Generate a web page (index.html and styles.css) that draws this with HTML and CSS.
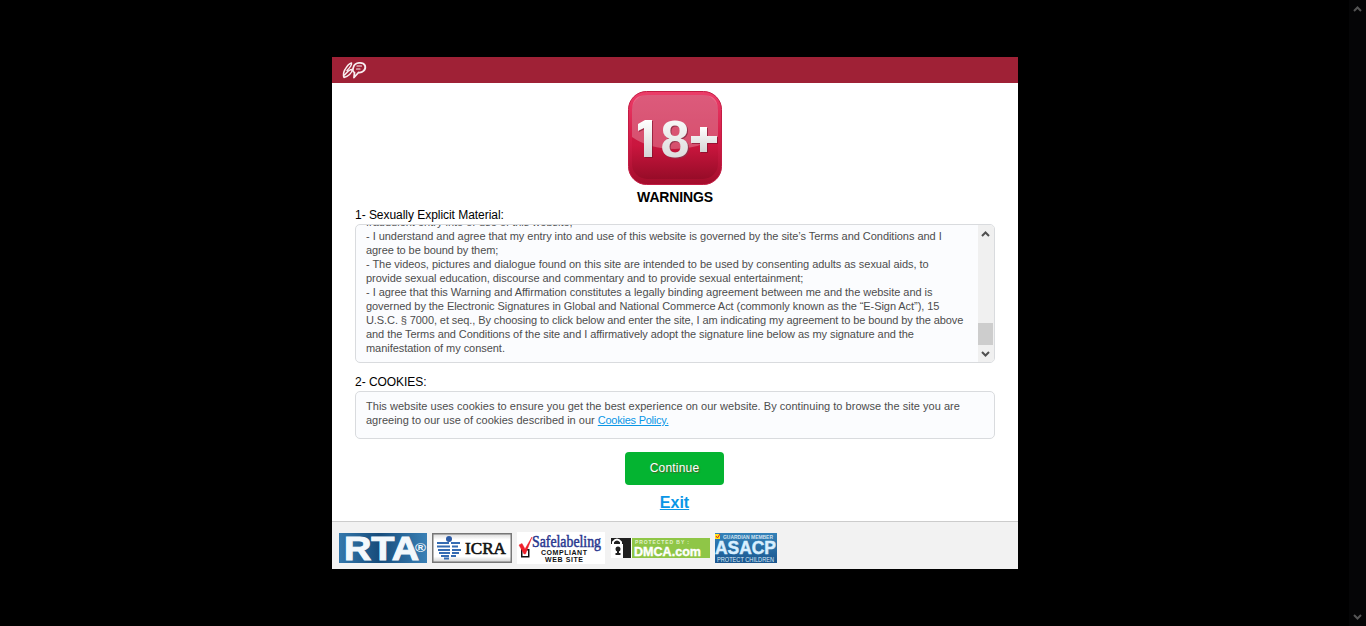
FILE: index.html
```html
<!DOCTYPE html>
<html lang="en">
<head>
<meta charset="utf-8">
<title>Warnings</title>
<link rel="stylesheet" href="styles.css">
</head>
<body>
<main class="page">
  <section class="modal">
    <header class="modal-header">
      <svg class="logo" width="28" height="20" viewBox="0 0 28 20" fill="none" stroke="#f8eef0" stroke-linecap="round" stroke-linejoin="round">
        <path stroke-width="1.500" d="M4 9.500C6 6 8 3.500 10.500 3C11 5.500 8 8.500 6 10.500M4 9.500C2.500 12 2 15 3 17.500C7 16.500 11 13 11.500 9.500C9.500 9 6 12 3.500 15"/>
        <path stroke-width="1.800" d="M12.500 7C14 2 22 1.500 24 5.500C25.500 10 21 13 17.500 12.500L13 17.500L13.500 12.500C11.500 12 11.500 9.500 12.500 7Z"/>
        <path stroke-width="1.200" d="M16 6H20.500M15.500 9H19"/>
      </svg>
    </header>
    <div class="modal-body">
      <svg class="age" width="94" height="94" viewBox="0 0 94 94">
        <defs>
          <linearGradient id="edge" x2="0" y2="1"><stop offset="0" stop-color="#ec3d69"/><stop offset=".5" stop-color="#d51d48"/><stop offset="1" stop-color="#a20d2b"/></linearGradient>
          <linearGradient id="face" x2="0" y2="1"><stop offset="0" stop-color="#d02450"/><stop offset=".6" stop-color="#ca163e"/><stop offset="1" stop-color="#970c28"/></linearGradient>
          <linearGradient id="num" x2="0" y2="1"><stop offset="0" stop-color="#fff"/><stop offset="1" stop-color="#d5d5d5"/></linearGradient>
        </defs>
        <rect x=".5" y=".5" width="93" height="93" rx="18" fill="url(#edge)" stroke="#c31b43"/>
        <rect x="4" y="4" width="86" height="84" rx="15" fill="url(#face)"/>
        <path d="M4 46V19Q4 4 19 4H75Q90 4 90 19V46Q70 58 47 58Q21 58 4 46Z" fill="#fff" fill-opacity=".25"/>
        <path class="age-shadow" d="M11 34L18 30H25V67H17V38L11 41ZM73 37H80V46H90V53H80V62H73V53H64V46H73Z"/>
        <g fill="url(#num)"><path d="M10 33L17 29H24V66H16V37L10 40Z"/><text class="age-eight" x="32.500" y="66" textLength="29" lengthAdjust="spacingAndGlyphs">8</text><path d="M72 36H79V45H89V52H79V61H72V52H63V45H72Z"/></g>
      </svg>
      <h1 class="title">WARNINGS</h1>
      <h2 class="label">1- Sexually Explicit Material:</h2>
      <div class="terms">
        <div class="terms-text">
          <div>fraudulent entry into or use of this website;</div>
          <div class="snug">- I understand and agree that my entry into and use of this website is governed by the site’s Terms and Conditions and I</div>
          <div class="tight">agree to be bound by them;</div>
          <div class="snug">- The videos, pictures and dialogue found on this site are intended to be used by consenting adults as sexual aids, to</div>
          <div class="snug">provide sexual education, discourse and commentary and to provide sexual entertainment;</div>
          <div class="snug">- I agree that this Warning and Affirmation constitutes a legally binding agreement between me and the website and is</div>
          <div class="close">governed by the Electronic Signatures in Global and National Commerce Act (commonly known as the “E-Sign Act”), 15</div>
          <div class="tight">U.S.C. § 7000, et seq., By choosing to click below and enter the site, I am indicating my agreement to be bound by the above</div>
          <div class="close">and the Terms and Conditions of the site and I affirmatively adopt the signature line below as my signature and the</div>
          <div class="snug">manifestation of my consent.</div>
        </div>
        <div class="terms-bar">
          <svg width="15" height="17" viewBox="0 0 15 17"><path class="arrow" d="M4 11L7.500 7.500L11 11"/></svg>
          <div class="thumb"></div>
          <svg width="15" height="17" viewBox="0 0 15 17"><path class="arrow" d="M4 7L7.500 10.500L11 7"/></svg>
        </div>
      </div>
      <h2 class="label label-cookies">2- COOKIES:</h2>
      <div class="cookies">
        <div class="loose">This website uses cookies to ensure you get the best experience on our website. By continuing to browse the site you are</div>
        <div>agreeing to our use of cookies described in our <a class="link" href="#">Cookies Policy.</a></div>
      </div>
      <a class="continue" href="#">Continue</a>
      <a class="exit" href="#">Exit</a>
    </div>
    <footer class="modal-footer">
      <svg class="badge-rta" width="88" height="30" viewBox="0 0 88 30">
        <defs><linearGradient id="rta"><stop offset="0" stop-color="#3478ac"/><stop offset=".45" stop-color="#174c7b"/><stop offset="1" stop-color="#3a80b5"/></linearGradient></defs>
        <rect width="88" height="30" fill="url(#rta)"/>
        <text class="rta-text" x="5" y="27" textLength="75" lengthAdjust="spacingAndGlyphs">RTA</text>
        <text class="rta-reg" x="76" y="19" textLength="11" lengthAdjust="spacingAndGlyphs">®</text>
      </svg>
      <svg class="badge-icra" width="80" height="30" viewBox="0 0 80 30">
        <defs><linearGradient id="icra" x2="0" y2="1"><stop offset="0" stop-color="#d8d8d8"/><stop offset=".2" stop-color="#fff"/><stop offset=".8" stop-color="#fff"/><stop offset="1" stop-color="#d0d0d0"/></linearGradient></defs>
        <rect x=".75" y=".75" width="78.500" height="28.500" fill="url(#icra)" stroke="#777" stroke-width="1.500"/>
        <circle cx="17" cy="6" r="3" fill="#2c5ba6"/>
        <path d="M5 10H17M19 10H28M5 13.500H18M20 13.500H26M6 17H18M20 17H29M7 20H18M20 20H27M9 23H17M19 23H24M12 25.500H17" stroke="#356bb2" stroke-width="2"/>
        <text class="icra-text" x="33" y="21" textLength="41" lengthAdjust="spacingAndGlyphs">ICRA</text>
      </svg>
      <svg class="badge-safe" width="88" height="32" viewBox="0 0 88 32">
        <rect width="88" height="32" fill="#fff"/>
        <rect x="4.750" y="17.750" width="7" height="7" fill="none" stroke="#111" stroke-width="1.500"/>
        <path d="M2 13L5 11.500L8 17L15 5L8.500 22H7Z" fill="#ef202b" stroke="#ef202b" stroke-width=".5"/>
        <text class="safe-title" x="15" y="15" textLength="69" lengthAdjust="spacingAndGlyphs">Safelabeling</text>
        <text class="safe-small" x="24" y="23" textLength="46">COMPLIANT</text>
        <text class="safe-small" x="28" y="30" textLength="38">WEB SITE</text>
      </svg>
      <svg class="badge-dmca" width="99" height="20" viewBox="0 0 99 20">
        <rect width="21" height="20" fill="#202020"/><rect x="21" width="78" height="20" fill="#8fc647"/><path d="M20.500 0V20" stroke="#fff"/>
        <path d="M2 7V4Q6-1 10 4V7" fill="none" stroke="#fff" stroke-width="2"/><path d="M0 6H12V20H0Z" fill="#fff"/>
        <circle cx="7" cy="11" r="2.500" fill="#202020"/><path d="M6 11H8V16H6ZM4.500 15H9.500V17H4.500Z" fill="#202020"/>
        <text class="dmca-small" x="24" y="6" textLength="54">PROTECTED BY :</text>
        <text class="dmca-title" x="23" y="18" textLength="67" lengthAdjust="spacingAndGlyphs">DMCA.com</text>
      </svg>
      <svg class="badge-asacp" width="62" height="30" viewBox="0 0 62 30">
        <defs><linearGradient id="asacp" x2="0" y2="1"><stop offset="0" stop-color="#3482b9"/><stop offset="1" stop-color="#1b568e"/></linearGradient></defs>
        <rect width="62" height="30" fill="url(#asacp)"/>
        <rect y="1" width="5" height="5" fill="#ffe51d"/><path d="M1 3L2.500 5L5 1" fill="none" stroke="#d91e28"/>
        <text class="asacp-small" x="8" y="6" textLength="50" lengthAdjust="spacingAndGlyphs">GUARDIAN MEMBER</text>
        <text class="asacp-title" x="0" y="21" textLength="61" lengthAdjust="spacingAndGlyphs">ASACP</text>
        <text class="asacp-bottom" x="2" y="29" textLength="57" lengthAdjust="spacingAndGlyphs">PROTECT CHILDREN</text>
      </svg>
    </footer>
  </section>
  <aside class="page-bar">
    <svg width="17" height="17" viewBox="0 0 17 17"><path class="arrow arrow-dim" d="M5 11L8.500 7.500L12 11"/></svg>
    <svg width="17" height="17" viewBox="0 0 17 17"><path class="arrow arrow-dim" d="M5 6L8.500 9.500L12 6"/></svg>
  </aside>
</main>
</body>
</html>
```
FILE: styles.css
```css
* { box-sizing: border-box; }
body { margin: 0; background: #000; font-family: "Liberation Sans", Arial, sans-serif; overflow: hidden; }
.page { display: grid; grid-template-columns: 1fr 17px; height: 626px; }
.modal { width: 686px; height: 512px; margin: 57px 0 0 332px; background: #fff; display: flex; flex-direction: column; }
.modal-header { height: 26px; background: #9f2136; padding: 3px 9px; }
.logo, .age, .terms-bar svg, .page-bar svg { display: block; }
.modal-body { height: 438px; padding: 8px 23px 0; display: flex; flex-direction: column; align-items: center; }
.age { flex: none; }
.age text { font-size: 52px; font-weight: bold; }
.age-eight { filter: drop-shadow(1px 1px 0 #93314a); }
.age-shadow { fill: #7d1029; opacity: .65; }
.title { margin: 4px 0 0; font-size: 14px; line-height: 17px; font-weight: bold; letter-spacing: -.15px; }
.label { align-self: flex-start; margin: 2px 0 0; font-size: 12px; line-height: 14px; font-weight: normal; letter-spacing: -.04px; }
.terms, .cookies { width: 640px; border: 1px solid #d9dbde; border-radius: 5px; background: #fbfcfe; color: #4d4d4d; font-size: 11px; line-height: 14px; white-space: nowrap; }
.terms { height: 139px; margin-top: 2px; display: flex; justify-content: space-between; overflow: hidden; flex: none; }
.terms-text { padding-left: 10px; margin-top: -10px; }
.snug { letter-spacing: -.04px; }
.close { letter-spacing: -.066px; }
.tight { letter-spacing: -.09px; }
.loose { letter-spacing: .027px; }
.terms-bar { width: 16px; background: #f0f0f0; display: flex; flex-direction: column; }
.thumb { width: 15px; height: 22px; margin: 81px 0 0; background: #cdcdcd; }
.arrow { fill: none; stroke: #505050; stroke-width: 2; }
.arrow-dim { stroke: #555; }
.label-cookies { margin-top: 12px; }
.cookies { height: 48px; margin-top: 2px; padding: 7px 10px; flex: none; }
.link, .exit { color: #0a96e6; }
.link { letter-spacing: -.24px; }
.continue { width: 99px; height: 33px; margin: 13px 1px 0 0; border-radius: 4px; background: #04b431; color: #fff; font-size: 12px; line-height: 32px; text-align: center; text-decoration: none; text-shadow: 1px 1px 1px #4e632b; letter-spacing: .2px; flex: none; }
.exit { margin: 8px 1px 0 0; font-size: 16px; line-height: 19px; font-weight: bold; }
.modal-footer { height: 48px; border-top: 1px solid #ccc; background: #f2f2f2; padding: 10px 7px 5px; display: flex; align-items: center; }
.modal-footer svg { flex: none; }
.badge-icra { margin-left: 5px; }
.badge-safe { margin-left: 5px; }
.badge-dmca { margin-left: 6px; }
.badge-asacp { margin-left: 5px; }
.rta-text { font: bold 33px "Liberation Sans", sans-serif; fill: #f3f8fc; stroke: #f3f8fc; stroke-width: 1px; }
.rta-reg { font: bold 13px "Liberation Sans", sans-serif; fill: #f3f8fc; }
.icra-text { font: 17px "Liberation Serif", serif; fill: #111; stroke: #111; stroke-width: .6px; }
.safe-title { font: 16px "Liberation Serif", serif; fill: #29378f; stroke: #29378f; stroke-width: .5px; }
.safe-small { font: bold 7px "Liberation Sans", sans-serif; fill: #111; }
.dmca-small { font: bold 5px "Liberation Sans", sans-serif; fill: #e1f2c9; }
.dmca-title { font: bold 13px "Liberation Sans", sans-serif; fill: #fff; stroke: #fff; stroke-width: .4px; }
.asacp-small { font: bold 5px "Liberation Sans", sans-serif; fill: #d0e1ef; }
.asacp-title { font: bold 18px "Liberation Sans", sans-serif; fill: #d8efff; stroke: #d8efff; stroke-width: .5px; }
.asacp-bottom { font: 6.5px "Liberation Sans", sans-serif; fill: #d9eaf7; }
.page-bar { background: #050506; display: flex; flex-direction: column; justify-content: space-between; }
```
